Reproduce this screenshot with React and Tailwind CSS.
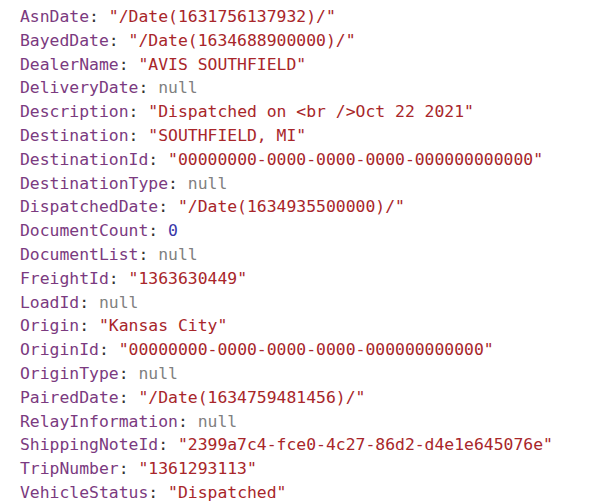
import React from "react";

// Propiedades del objeto tal como se ven en la consola
const rows = [
  ["AsnDate", "str", "/Date(1631756137932)/"],
  ["BayedDate", "str", "/Date(1634688900000)/"],
  ["DealerName", "str", "AVIS SOUTHFIELD"],
  ["DeliveryDate", "null"],
  ["Description", "str", "Dispatched on <br />Oct 22 2021"],
  ["Destination", "str", "SOUTHFIELD, MI"],
  ["DestinationId", "str", "00000000-0000-0000-0000-000000000000"],
  ["DestinationType", "null"],
  ["DispatchedDate", "str", "/Date(1634935500000)/"],
  ["DocumentCount", "num", "0"],
  ["DocumentList", "null"],
  ["FreightId", "str", "1363630449"],
  ["LoadId", "null"],
  ["Origin", "str", "Kansas City"],
  ["OriginId", "str", "00000000-0000-0000-0000-000000000000"],
  ["OriginType", "null"],
  ["PairedDate", "str", "/Date(1634759481456)/"],
  ["RelayInformation", "null"],
  ["ShippingNoteId", "str", "2399a7c4-fce0-4c27-86d2-d4e1e645076e"],
  ["TripNumber", "str", "1361293113"],
  ["VehicleStatus", "str", "Dispatched"],
];

const Value = ({ type, value }) => {
  if (type === "null") return <span className="text-[#808080]">null</span>;
  if (type === "num") return <span className="text-[#3a36a8]">{value}</span>;
  return <span className="text-[#a8262a]">"{value}"</span>;
};

export default function App() {
  return (
    <div className="w-[589px] h-[504px] overflow-hidden bg-white pl-[20px] pt-[5px] font-['DejaVu_Sans_Mono',monospace] text-[16.4px] leading-[23.8px]">
      {rows.map(([key, type, value]) => (
        <div key={key} className="whitespace-pre">
          <span className="text-[#7b3a80]">{key}</span>
          <span className="text-[#333]">: </span>
          <Value type={type} value={value} />
        </div>
      ))}
    </div>
  );
}
